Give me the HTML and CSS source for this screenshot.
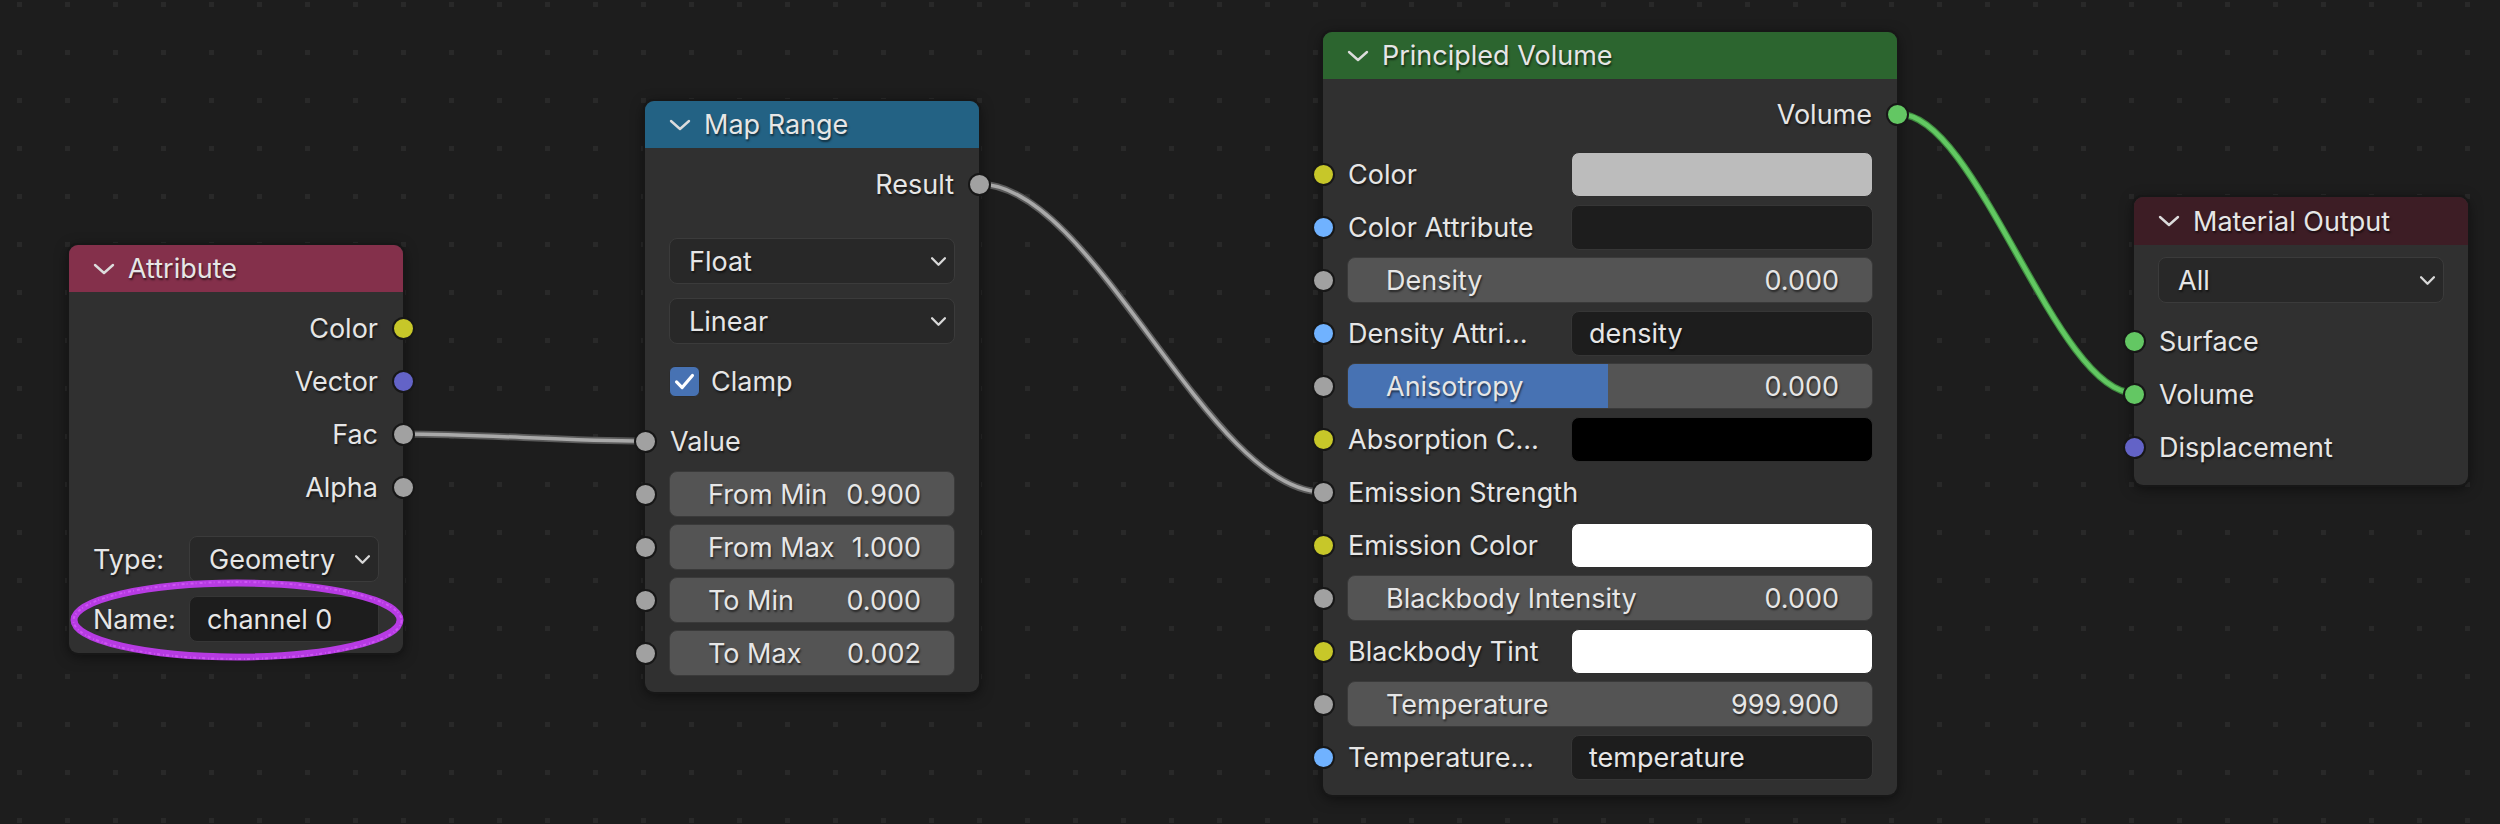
FILE: index.html
```html
<!DOCTYPE html>
<html>
<head>
<meta charset="utf-8">
<link rel="stylesheet" href="styles.css">
</head>
<body>
<div class="canvas">
  <svg class="layer grid" width="2500" height="824">
    <defs>
      <pattern id="dots" x="0" y="0" width="48" height="48" patternUnits="userSpaceOnUse">
        <rect x="17" y="2" width="5" height="5" fill="#292929"/>
      </pattern>
    </defs>
    <rect width="2500" height="824" fill="url(#dots)"/>
  </svg>

  <svg class="layer links" width="2500" height="824">
    <g fill="none" stroke-linecap="round">
      <path d="M403 434 C483 434 564 441 644 441" stroke="#5a5a5a" stroke-width="7"/>
      <path d="M403 434 C483 434 564 441 644 441" stroke="#a9a9a9" stroke-width="3.5"/>
      <path d="M979 184 C1094 184 1208 492 1323 492" stroke="#5a5a5a" stroke-width="7"/>
      <path d="M979 184 C1094 184 1208 492 1323 492" stroke="#a9a9a9" stroke-width="3.5"/>
      <path d="M1899 114 C1977 114 2056 393 2134 393" stroke="#3f8a3f" stroke-width="7"/>
      <path d="M1899 114 C1977 114 2056 393 2134 393" stroke="#62c862" stroke-width="4.5"/>
    </g>
  </svg>

  <!-- Attribute -->
  <div class="node n-attr">
    <div class="head h-attr"><svg class="chev" viewBox="0 0 22 12"><path d="M2 2 L11 10 L20 2"/></svg><span>Attribute</span></div>
    <div class="body">
      <div class="row out"><span>Color</span><i class="sock s-col"></i></div>
      <div class="row out"><span>Vector</span><i class="sock s-vec"></i></div>
      <div class="row out"><span>Fac</span><i class="sock s-flt"></i></div>
      <div class="row out"><span>Alpha</span><i class="sock s-flt"></i></div>
      <div class="row prop mt19"><span class="plabel">Type:</span><div class="drop w190"><span>Geometry</span><svg class="dchev" viewBox="0 0 14 8"><path d="M1 1 L7 7 L13 1"/></svg></div></div>
      <div class="row prop mt7"><span class="plabel">Name:</span><div class="tfield w190"><span>channel 0</span></div></div>
    </div>
  </div>

  <!-- Map Range -->
  <div class="node n-map">
    <div class="head h-map"><svg class="chev" viewBox="0 0 22 12"><path d="M2 2 L11 10 L20 2"/></svg><span>Map Range</span></div>
    <div class="body pb16">
      <div class="row out"><span>Result</span><i class="sock s-flt"></i></div>
      <div class="row prop mt24"><div class="drop full"><span>Float</span><svg class="dchev" viewBox="0 0 14 8"><path d="M1 1 L7 7 L13 1"/></svg></div></div>
      <div class="row prop mt7"><div class="drop full"><span>Linear</span><svg class="dchev" viewBox="0 0 14 8"><path d="M1 1 L7 7 L13 1"/></svg></div></div>
      <div class="row prop mt7"><div class="check"><svg viewBox="0 0 31 31"><path d="M7 16 L13 22 L24 9"/></svg></div><span class="clabel">Clamp</span></div>
      <div class="row in mt7"><i class="sock s-flt"></i><span>Value</span></div>
      <div class="row in"><i class="sock s-flt"></i><div class="slider"><span>From Min</span><span>0.900</span></div></div>
      <div class="row in"><i class="sock s-flt"></i><div class="slider"><span>From Max</span><span>1.000</span></div></div>
      <div class="row in"><i class="sock s-flt"></i><div class="slider"><span>To Min</span><span>0.000</span></div></div>
      <div class="row in"><i class="sock s-flt"></i><div class="slider"><span>To Max</span><span>0.002</span></div></div>
    </div>
  </div>

  <!-- Principled Volume -->
  <div class="node n-pv">
    <div class="head h-pv"><svg class="chev" viewBox="0 0 22 12"><path d="M2 2 L11 10 L20 2"/></svg><span>Principled Volume</span></div>
    <div class="body pt12">
      <div class="row out"><span>Volume</span><i class="sock s-sh"></i></div>
      <div class="row in mt7"><i class="sock s-col"></i><span class="ilabel">Color</span><div class="swatch" style="background:#bcbcbc"></div></div>
      <div class="row in"><i class="sock s-str"></i><span class="ilabel">Color Attribute</span><div class="tfield w302"></div></div>
      <div class="row in"><i class="sock s-flt"></i><div class="slider"><span>Density</span><span>0.000</span></div></div>
      <div class="row in"><i class="sock s-str"></i><span class="ilabel">Density Attri…</span><div class="tfield w302"><span>density</span></div></div>
      <div class="row in"><i class="sock s-flt"></i><div class="slider"><div class="fill" style="width:49.6%"></div><span>Anisotropy</span><span>0.000</span></div></div>
      <div class="row in"><i class="sock s-col"></i><span class="ilabel">Absorption C…</span><div class="swatch" style="background:#000000"></div></div>
      <div class="row in"><i class="sock s-flt"></i><span class="ilabel">Emission Strength</span></div>
      <div class="row in"><i class="sock s-col"></i><span class="ilabel">Emission Color</span><div class="swatch" style="background:#ffffff"></div></div>
      <div class="row in"><i class="sock s-flt"></i><div class="slider"><span>Blackbody Intensity</span><span>0.000</span></div></div>
      <div class="row in"><i class="sock s-col"></i><span class="ilabel">Blackbody Tint</span><div class="swatch" style="background:#ffffff"></div></div>
      <div class="row in"><i class="sock s-flt"></i><div class="slider"><span>Temperature</span><span>999.900</span></div></div>
      <div class="row in"><i class="sock s-str"></i><span class="ilabel">Temperature…</span><div class="tfield w302"><span>temperature</span></div></div>
    </div>
  </div>

  <!-- Material Output -->
  <div class="node n-mo">
    <div class="head h-mo"><svg class="chev" viewBox="0 0 22 12"><path d="M2 2 L11 10 L20 2"/></svg><span>Material Output</span></div>
    <div class="body pt12">
      <div class="row prop"><div class="drop full"><span>All</span><svg class="dchev" viewBox="0 0 14 8"><path d="M1 1 L7 7 L13 1"/></svg></div></div>
      <div class="row in mt8"><i class="sock s-sh"></i><span>Surface</span></div>
      <div class="row in"><i class="sock s-sh"></i><span>Volume</span></div>
      <div class="row in"><i class="sock s-vec"></i><span>Displacement</span></div>
    </div>
  </div>

  <svg class="layer annot" width="2500" height="824">
    <ellipse cx="237" cy="620" rx="163" ry="37" fill="none" stroke="#bf3ced" stroke-width="7" opacity="0.95"/>
    <ellipse cx="237.5" cy="620.5" rx="164" ry="38.5" fill="none" stroke="#d35cf7" stroke-width="2" stroke-dasharray="3 2 1 3" opacity="0.8"/>
  </svg>
</div>
</body>
</html>
```

FILE: styles.css
```css
* { box-sizing: border-box; }
html, body { margin: 0; padding: 0; }
body {
  width: 2500px;
  height: 824px;
  overflow: hidden;
  background: #1d1d1d;
  font-family: Inter, "DejaVu Sans", sans-serif;
  font-size: 27px;
  color: #e6e6e6;
}
.canvas { position: relative; width: 2500px; height: 824px; }
.layer { position: absolute; left: 0; top: 0; }
.grid { z-index: 0; }
.links { z-index: 1; }
.annot { z-index: 5; pointer-events: none; }

span { text-shadow: 1px 2px 2px rgba(0, 0, 0, 0.55); white-space: nowrap; }

.node {
  position: absolute;
  z-index: 2;
  background: #303030;
  border-radius: 9px;
  box-shadow: 0 0 0 2px #171717, 0 3px 14px rgba(0, 0, 0, 0.55);
}
.n-attr { left: 69px; top: 245px; width: 334px; }
.n-map { left: 645px; top: 101px; width: 334px; }
.n-pv { left: 1323px; top: 32px; width: 574px; }
.n-mo { left: 2134px; top: 197px; width: 334px; }

.head {
  height: 47px;
  border-radius: 9px 9px 0 0;
  display: flex;
  align-items: center;
  gap: 13px;
  padding-left: 24px;
}
.h-attr { background: #84304b; }
.h-map { background: #236284; }
.h-pv { background: #2c652f; }
.h-mo { background: #3d1d25; height: 48px; }

.chev { width: 22px; height: 12px; flex: none; }
.chev path { fill: none; stroke: #dcdcdc; stroke-width: 2.4; stroke-linecap: round; stroke-linejoin: round; }

.body {
  display: flex;
  flex-direction: column;
  gap: 7px;
  padding: 13px 0 11px;
}
.pb16 { padding-bottom: 16px; }
.pt12 { padding-top: 12px; padding-bottom: 15px; }
.mt7 { margin-top: 7px; }
.mt8 { margin-top: 8px; }
.mt19 { margin-top: 19px; }
.mt24 { margin-top: 24px; }

.row {
  position: relative;
  height: 46px;
  display: flex;
  align-items: center;
  flex: none;
}
.row.out { justify-content: flex-end; padding-right: 25px; }
.row.in { padding: 0 24px 0 25px; }
.row.prop { padding: 0 24px; }

.sock {
  position: absolute;
  top: 50%;
  width: 23px;
  height: 23px;
  margin-top: -11.5px;
  border-radius: 50%;
  border: 2.5px solid #171717;
}
.out .sock { right: -11.5px; }
.in .sock { left: -11.5px; }
.s-col { background: #c7c729; }
.s-vec { background: #6363c7; }
.s-flt { background: #a1a1a1; }
.s-str { background: #70b2ff; }
.s-sh { background: #63c763; }

.plabel { flex: 1; }
.ilabel { flex: 1; min-width: 0; overflow: hidden; }

.drop, .tfield {
  height: 46px;
  border-radius: 8px;
  display: flex;
  align-items: center;
  padding-left: 19px;
}
.drop {
  background: #282828;
  border: 1.5px solid #3b3b3b;
  justify-content: space-between;
  padding-right: 8px;
}
.tfield {
  background: #1d1d1d;
  border: 1.5px solid #363636;
  padding-left: 17px;
}
.full { flex: 1; }
.w190 { width: 190px; flex: none; }
.w302 { width: 302px; flex: none; height: 45px; }
.dchev { width: 15px; height: 9px; }
.dchev path { fill: none; stroke: #d8d8d8; stroke-width: 2.2; stroke-linecap: round; stroke-linejoin: round; }

.check {
  width: 31px;
  height: 31px;
  border-radius: 6px;
  background: #4772b3;
  border: 1.5px solid #2c2c2c;
  flex: none;
}
.check svg { width: 100%; height: 100%; display: block; }
.check path { fill: none; stroke: #ffffff; stroke-width: 3.4; stroke-linecap: round; stroke-linejoin: round; }
.clabel { margin-left: 11px; }

.slider {
  position: relative;
  flex: 1;
  height: 46px;
  margin-left: -1px;
  border-radius: 8px;
  background: #545454;
  border: 1.5px solid #3a3a3a;
  overflow: hidden;
  display: flex;
  align-items: center;
  justify-content: space-between;
  padding: 0 33px 0 38px;
}
.slider span { position: relative; }
.fill {
  position: absolute;
  left: 0;
  top: 0;
  bottom: 0;
  background: #4772b3;
}

.swatch {
  width: 302px;
  height: 45px;
  flex: none;
  margin-left: auto;
  border-radius: 8px;
  border: 1.5px solid #2e2e2e;
}
```
